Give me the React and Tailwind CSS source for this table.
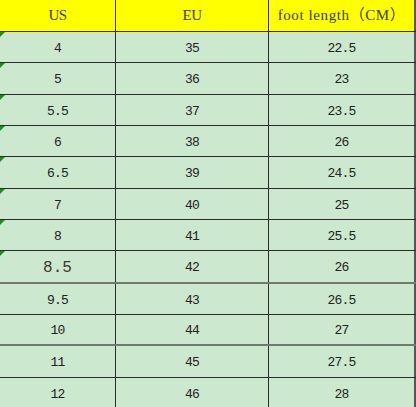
import React from "react";

const rows = [
  { us: "4", eu: "35", cm: "22.5", h: "h-[31px]", b: "border-b border-[#2b2b2b]", tri: true },
  { us: "5", eu: "36", cm: "23", h: "h-[32px]", b: "border-b border-[#2b2b2b]", tri: true },
  { us: "5.5", eu: "37", cm: "23.5", h: "h-[31px]", b: "border-b border-[#2b2b2b]", tri: true },
  { us: "6", eu: "38", cm: "26", h: "h-[31px]", b: "border-b border-[#2b2b2b]", tri: true },
  { us: "6.5", eu: "39", cm: "24.5", h: "h-[32px]", b: "border-b border-[#2b2b2b]", tri: true },
  { us: "7", eu: "40", cm: "25", h: "h-[31px]", b: "border-b border-[#2b2b2b]", tri: true },
  { us: "8", eu: "41", cm: "25.5", h: "h-[31px]", b: "border-b border-[#2b2b2b]", tri: true },
  { us: "8.5", eu: "42", cm: "26", h: "h-[33px]", b: "border-b-2 border-[#6e7b6e]", tri: true, big: true },
  { us: "9.5", eu: "43", cm: "26.5", h: "h-[31px]", b: "border-b border-[#2b2b2b]", tri: false },
  { us: "10", eu: "44", cm: "27", h: "h-[31px]", b: "border-b-2 border-[#6e7b6e]", tri: false },
  { us: "11", eu: "45", cm: "27.5", h: "h-[32px]", b: "border-b border-[#2b2b2b]", tri: false },
  { us: "12", eu: "46", cm: "28", h: "h-[30px]", b: "", tri: false },
];

const mono = { fontFamily: '"Liberation Mono", "Noto Sans CJK SC", monospace' };
const serif = { fontFamily: '"Liberation Serif", "Noto Sans CJK SC", serif' };

function Cell({ children, w, last, big, tri }) {
  return (
    <div
      className={`relative flex items-center justify-center pt-[3px] ${w} ${
        last ? "border-r-2 border-[#555]" : "border-r border-[#2b2b2b]"
      } ${big ? "text-[16px] tracking-[0px] text-[#3a3a2a]" : "text-[13px] tracking-[-0.8px] text-[#222]"}`}
      style={mono}
    >
      {tri && (
        <span className="absolute left-0 top-0 h-0 w-0 border-t-[5px] border-r-[5px] border-t-[#1f8a2a] border-r-transparent" />
      )}
      {children}
    </div>
  );
}

export default function App() {
  return (
    <div className="w-[416px] h-[407px] overflow-hidden bg-[#cce8cf] flex flex-col">
      <div className="flex h-[32px] bg-[#ffff00] border-b border-[#2b2b2b] shrink-0">
        <div
          className="flex items-center justify-center w-[116px] border-r border-[#2b2b2b] text-[15px] tracking-[-0.5px] text-[#3b3b10]"
          style={serif}
        >
          US
        </div>
        <div
          className="flex items-center justify-center w-[153px] border-r border-[#2b2b2b] text-[15px] tracking-[-0.5px] text-[#3b3b10]"
          style={serif}
        >
          EU
        </div>
        <div
          className="flex items-center justify-center w-[147px] border-r-2 border-[#555] text-[15px] tracking-[0.6px] text-[#3b3b10]"
          style={serif}
        >
          foot length（CM）
        </div>
      </div>
      {rows.map((r) => (
        <div key={r.us} className={`flex shrink-0 ${r.h} ${r.b}`}>
          <Cell w="w-[116px]" tri={r.tri} big={r.big}>{r.us}</Cell>
          <Cell w="w-[153px]">{r.eu}</Cell>
          <Cell w="w-[147px]" last>{r.cm}</Cell>
        </div>
      ))}
    </div>
  );
}
